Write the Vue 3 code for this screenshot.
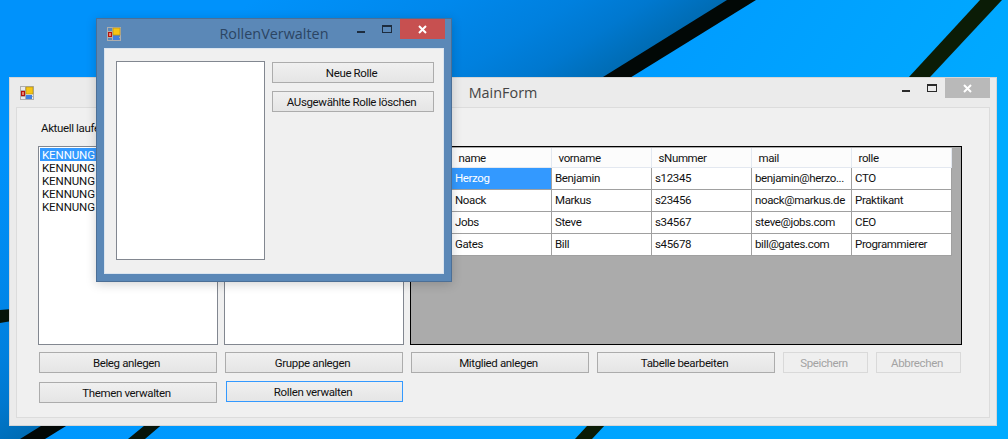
<script setup>
const kennungen = ['KENNUNG', 'KENNUNG', 'KENNUNG', 'KENNUNG', 'KENNUNG']

const spalten = ['name', 'vorname', 'sNummer', 'mail', 'rolle']

const zeilen = [
  ['Herzog', 'Benjamin', 's12345', 'benjamin@herzo...', 'CTO'],
  ['Noack', 'Markus', 's23456', 'noack@markus.de', 'Praktikant'],
  ['Jobs', 'Steve', 's34567', 'steve@jobs.com', 'CEO'],
  ['Gates', 'Bill', 's45678', 'bill@gates.com', 'Programmierer']
]
</script>

<template>
  <div class="desktop">
    <svg class="wallpaper" width="1008" height="439" viewBox="0 0 1008 439">
      <defs>
        <linearGradient id="base" x1="0" y1="0" x2="1" y2="0.3">
          <stop offset="0" stop-color="#0092fb" />
          <stop offset="0.6" stop-color="#009bff" />
          <stop offset="1" stop-color="#00abff" />
        </linearGradient>
        <linearGradient id="shade" gradientUnits="userSpaceOnUse" x1="603" y1="77" x2="471" y2="-135">
          <stop offset="0" stop-color="#006cb4" />
          <stop offset="0.16" stop-color="#0078cf" />
          <stop offset="0.32" stop-color="#0080de" />
          <stop offset="0.58" stop-color="#0088ec" />
          <stop offset="1" stop-color="#0092fb" />
        </linearGradient>
      </defs>
      <rect width="1008" height="439" fill="url(#base)" />
      <polygon points="0,0 740,0 30,439 0,439" fill="url(#shade)" />
      <polygon points="727,0 756,0 45,439 20,439" fill="#020806" />
      <polygon points="980,0 1002,0 592,439 575,439" fill="#0b1c06" />
      <polygon points="200,380 214,380 145,439 128,439" fill="#06140a" />
      <polygon points="0,310 12,309 12,321 0,323" fill="#06140a" />
    </svg>

    <section class="window main-form">
      <header class="titlebar">
        <svg class="app-icon" width="14" height="14" viewBox="0 0 14 14">
          <rect x="0.5" y="0.5" width="13" height="13" fill="none" stroke="#aeaeae" />
          <path d="M0.5 4.5H6M5.5 0.5V13.5M0.5 10.5H13.5" stroke="#aeaeae" fill="none" />
          <rect x="1" y="5" width="4" height="5" fill="#b5120c" />
          <rect x="2" y="6" width="2" height="3" fill="#e8806a" />
          <rect x="6" y="1" width="7" height="7" fill="#f6c514" stroke="#b08a12" stroke-width="0.6" />
          <rect x="6" y="9" width="6" height="4" fill="#3f7fe0" />
        </svg>
        <span class="title">MainForm</span>
        <div class="controls">
          <span class="ctl"><i class="glyph-min"></i></span>
          <span class="ctl narrow"><i class="glyph-max"></i></span>
          <span class="close inactive">
            <svg width="9" height="9" viewBox="0 0 9 9"><path d="M1 1L8 8M8 1L1 8" stroke="#fff" stroke-width="2" /></svg>
          </span>
        </div>
      </header>

      <div class="client main-client">
        <label class="caption">Aktuell laufende Belege</label>
        <div class="lists">
          <ul class="listbox">
            <li v-for="(k, i) in kennungen" :key="i" :class="{ selected: i === 0 }">{{ k }}</li>
          </ul>
          <ul class="listbox"></ul>
          <div class="datagrid">
            <div class="grid-head"></div>
            <div v-for="s in spalten" :key="s" class="grid-head">{{ s }}</div>
            <template v-for="(z, i) in zeilen" :key="i">
              <div class="grid-head"></div>
              <div
                v-for="(wert, j) in z"
                :key="j"
                :class="['cell', { selected: i === 0 && j === 0 }]"
              >{{ wert }}</div>
            </template>
          </div>
        </div>

        <div class="button-row first">
          <button class="btn wide">Beleg anlegen</button>
          <button class="btn wide">Gruppe anlegen</button>
          <button class="btn wide">Mitglied anlegen</button>
          <button class="btn wide">Tabelle bearbeiten</button>
          <button class="btn small" disabled>Speichern</button>
          <button class="btn small" disabled>Abbrechen</button>
        </div>
        <div class="button-row second">
          <button class="btn wide">Themen verwalten</button>
          <button class="btn focused">Rollen verwalten</button>
        </div>
      </div>
    </section>

    <section class="window rollen-form">
      <header class="titlebar">
        <svg class="app-icon" width="14" height="14" viewBox="0 0 14 14">
          <rect x="0.5" y="0.5" width="13" height="13" fill="none" stroke="#aeaeae" />
          <path d="M0.5 4.5H6M5.5 0.5V13.5M0.5 10.5H13.5" stroke="#aeaeae" fill="none" />
          <rect x="1" y="5" width="4" height="5" fill="#b5120c" />
          <rect x="2" y="6" width="2" height="3" fill="#e8806a" />
          <rect x="6" y="1" width="7" height="7" fill="#f6c514" stroke="#b08a12" stroke-width="0.6" />
          <rect x="6" y="9" width="6" height="4" fill="#3f7fe0" />
        </svg>
        <span class="title">RollenVerwalten</span>
        <div class="controls">
          <span class="ctl"><i class="glyph-min"></i></span>
          <span class="ctl narrow"><i class="glyph-max"></i></span>
          <span class="close">
            <svg width="9" height="9" viewBox="0 0 9 9"><path d="M1 1L8 8M8 1L1 8" stroke="#fff" stroke-width="2" /></svg>
          </span>
        </div>
      </header>

      <div class="client rollen-client">
        <ul class="listbox rollen-list"></ul>
        <div class="rollen-actions">
          <button class="btn">Neue Rolle</button>
          <button class="btn">AUsgewählte Rolle löschen</button>
        </div>
      </div>
    </section>
  </div>
</template>

<style>
html,
body {
  margin: 0;
  overflow: hidden;
}
</style>

<style scoped>
.desktop {
  position: relative;
  width: 1008px;
  height: 439px;
  overflow: hidden;
  font-family: Roboto, "Liberation Sans", sans-serif;
  font-size: 11.5px;
  letter-spacing: -0.36px;
  color: #111;
}

.wallpaper {
  position: absolute;
  left: 0;
  top: 0;
}

.window {
  position: absolute;
  box-sizing: border-box;
  display: flex;
  flex-direction: column;
}

.main-form {
  left: 9px;
  top: 77px;
  width: 988px;
  height: 349px;
  background: #ebebeb;
  border: 1px solid #d6d6d6;
}

.rollen-form {
  left: 96px;
  top: 18px;
  width: 356px;
  height: 264px;
  background: #5b88b7;
  border: 1px solid #4c6f96;
  box-shadow: 0 2px 10px rgba(0, 0, 0, 0.18);
}

.titlebar {
  display: grid;
  grid-template-columns: 1fr auto 1fr;
  align-items: center;
  height: 29px;
  flex-shrink: 0;
  padding: 0 6px;
}

.app-icon {
  display: block;
  margin-left: 4px;
}

.title {
  font-family: "Open Sans", sans-serif;
  font-size: 14.4px;
  letter-spacing: 0;
  color: #444;
}

.rollen-form .title {
  color: #2b4563;
}

.controls {
  display: flex;
  justify-content: flex-end;
  align-self: start;
}

.ctl {
  display: flex;
  justify-content: center;
  width: 27px;
  height: 20px;
}

.ctl.narrow {
  width: 26px;
}

.glyph-min {
  display: block;
  width: 8px;
  height: 2px;
  margin-top: 12px;
  background: #2a2a2a;
}

.glyph-max {
  display: block;
  box-sizing: border-box;
  width: 10px;
  height: 8px;
  margin-top: 6px;
  border: 1px solid #2a2a2a;
  border-top-width: 2px;
}

.rollen-form .glyph-min {
  background: #1d2c3e;
}

.rollen-form .glyph-max {
  border-color: #1d2c3e;
}

.close {
  display: flex;
  align-items: center;
  justify-content: center;
  width: 45px;
  height: 20px;
  background: #c75050;
}

.close.inactive {
  background: #b9b9b9;
}

.client {
  box-sizing: border-box;
  flex: 1;
  margin: 0 6px 7px;
  background: #f0f0f0;
  border: 1px solid #dcdcdc;
}

.main-client {
  padding: 12px 0 0 21px;
}

.caption {
  display: block;
  height: 26px;
  margin-left: 3px;
  line-height: 16px;
}

.lists {
  display: flex;
  gap: 6px;
  height: 199px;
}

.listbox {
  box-sizing: border-box;
  width: 180px;
  height: 100%;
  margin: 0;
  padding: 1px;
  list-style: none;
  background: #fff;
  border: 1px solid #828790;
}

.listbox li {
  height: 13px;
  padding-left: 2px;
  line-height: 15px;
  letter-spacing: -0.1px;
}

.listbox li.selected {
  background: #3399ff;
  color: #fff;
}

.datagrid {
  box-sizing: border-box;
  display: grid;
  grid-template-columns: 41px repeat(5, 100px);
  grid-auto-rows: 22px;
  align-content: start;
  width: 552px;
  height: 100%;
  padding-top: 1px;
  background: #ababab;
  border: 1px solid #000;
}

.grid-head {
  box-sizing: border-box;
  padding-left: 6.5px;
  line-height: 20px;
  height: 20px;
  background: #fcfcfc;
  border-right: 1px solid #e3e8f0;
  border-bottom: 1px solid #e3e8f0;
}

.datagrid .grid-head {
  align-self: start;
}

.cell {
  box-sizing: border-box;
  height: 22px;
  margin-top: -2px;
  padding-left: 3px;
  line-height: 20px;
  white-space: nowrap;
  overflow: hidden;
  background: #fff;
  border-right: 1px solid #a0a0a0;
  border-bottom: 1px solid #a0a0a0;
}

.cell.selected {
  background: #3399ff;
  color: #fff;
}

.button-row {
  display: flex;
  gap: 8px;
  margin-left: 1px;
}

.button-row.first {
  margin-top: 7px;
}

.button-row.second {
  margin-top: 9px;
}

.btn {
  box-sizing: border-box;
  height: 21px;
  padding: 0 3px 0 0;
  font: inherit;
  letter-spacing: inherit;
  color: #111;
  background: linear-gradient(#f0f0f0, #e5e5e5);
  border: 1px solid #acacac;
  border-radius: 0;
}

.btn.wide {
  width: 178px;
}

.btn.small {
  width: 85px;
}

.btn:disabled {
  color: #a3a3a3;
  background: #efefef;
  border-color: #d9d9d9;
}

.btn.focused {
  width: 177px;
  margin: -1px 0 0 1px;
  border-color: #3399ff;
}

.rollen-form .client {
  display: flex;
  gap: 7px;
  margin: 0 7px 7px;
  padding: 12px 0 0 11px;
  border-color: #dbe5ef;
}

.rollen-list {
  width: 149px;
  height: 199px;
}

.rollen-actions {
  display: flex;
  flex-direction: column;
  gap: 8px;
  width: 162px;
  margin-top: 1px;
}
</style>
